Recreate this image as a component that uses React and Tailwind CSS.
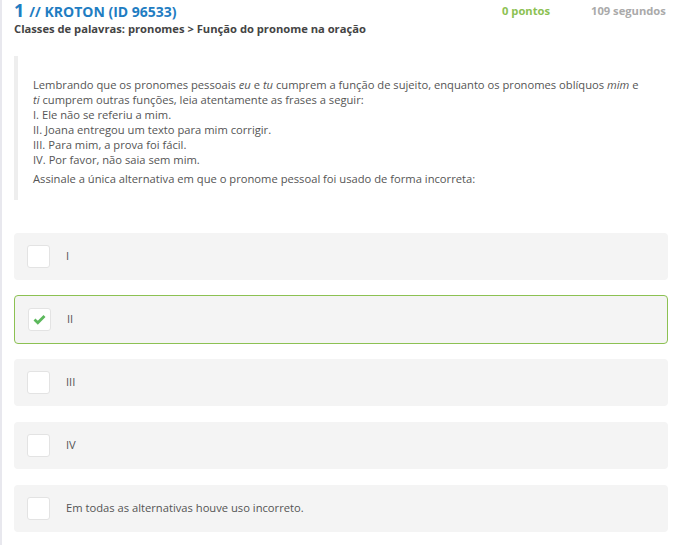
import React from 'react';

const options = [
  { label: 'I', checked: false },
  { label: 'II', checked: true },
  { label: 'III', checked: false },
  { label: 'IV', checked: false },
  { label: 'Em todas as alternativas houve uso incorreto.', checked: false },
];

const Check = ({ checked }) => (
  <div className="w-[23px] h-[23px] bg-white border border-[#e3e3e3] rounded-[3px] flex items-center justify-center shrink-0">
    {checked && (
      <svg width="13" height="11" viewBox="0 0 13 11">
        <path d="M1.5 5.6 L4.8 8.8 L11.5 2" fill="none" stroke="#5cb85c" strokeWidth="2.8" />
      </svg>
    )}
  </div>
);

export default function App() {
  return (
    <div
      className="w-[679px] h-[545px] bg-white border-l-2 border-[#e8e8ee] overflow-hidden text-[#555]"
      style={{ fontFamily: '"Open Sans", sans-serif' }}
    >
      <div className="pl-[12px] pr-[11px]">
        <div className="flex items-center h-[21px]">
          <div className="flex items-baseline text-[#1f7dc2] font-bold leading-[21px]">
            <span className="text-[18px]">1</span>
            <span className="text-[14px] ml-[5px]">// KROTON (ID 96533)</span>
          </div>
          <div className="ml-auto flex text-[11.2px] font-bold leading-[16px] whitespace-nowrap">
            <span className="text-[#8cc152] w-[89px]">0 pontos</span>
            <span className="text-[#aaa] w-[77px]">109 segundos</span>
          </div>
        </div>
        <div className="text-[11.2px] font-bold text-[#444] leading-[16px]">
          Classes de palavras: pronomes &gt; Função do pronome na oração
        </div>

        <div className="mt-[19px] border-l-[4px] border-[#eeeeee] pl-[15px] pt-[21px] pb-[14px] pr-[26px] text-[11.2px] leading-[15px]">
          <p>
            Lembrando que os pronomes pessoais <i>eu</i> e <i>tu</i> cumprem a função de sujeito, enquanto os pronomes oblíquos <i>mim</i> e <i>ti</i> cumprem outras funções, leia atentamente as frases a seguir:
            <br />I. Ele não se referiu a mim.
            <br />II. Joana entregou um texto para mim corrigir.
            <br />III. Para mim, a prova foi fácil.
            <br />IV. Por favor, não saia sem mim.
          </p>
          <p className="mt-[4px]">Assinale a única alternativa em que o pronome pessoal foi usado de forma incorreta:</p>
        </div>

        <div className="mt-[33px] flex flex-col gap-[16px]">
          {options.map((o) => (
            <div
              key={o.label}
              className={`h-[47px] rounded-[4px] bg-[#f4f4f4] flex items-center pl-[13px] gap-[16px] text-[11.2px] ${
                o.checked ? 'border border-[#8cc152] h-[49px] -my-[1px]' : ''
              }`}
            >
              <Check checked={o.checked} />
              <span>{o.label}</span>
            </div>
          ))}
        </div>
      </div>
    </div>
  );
}
